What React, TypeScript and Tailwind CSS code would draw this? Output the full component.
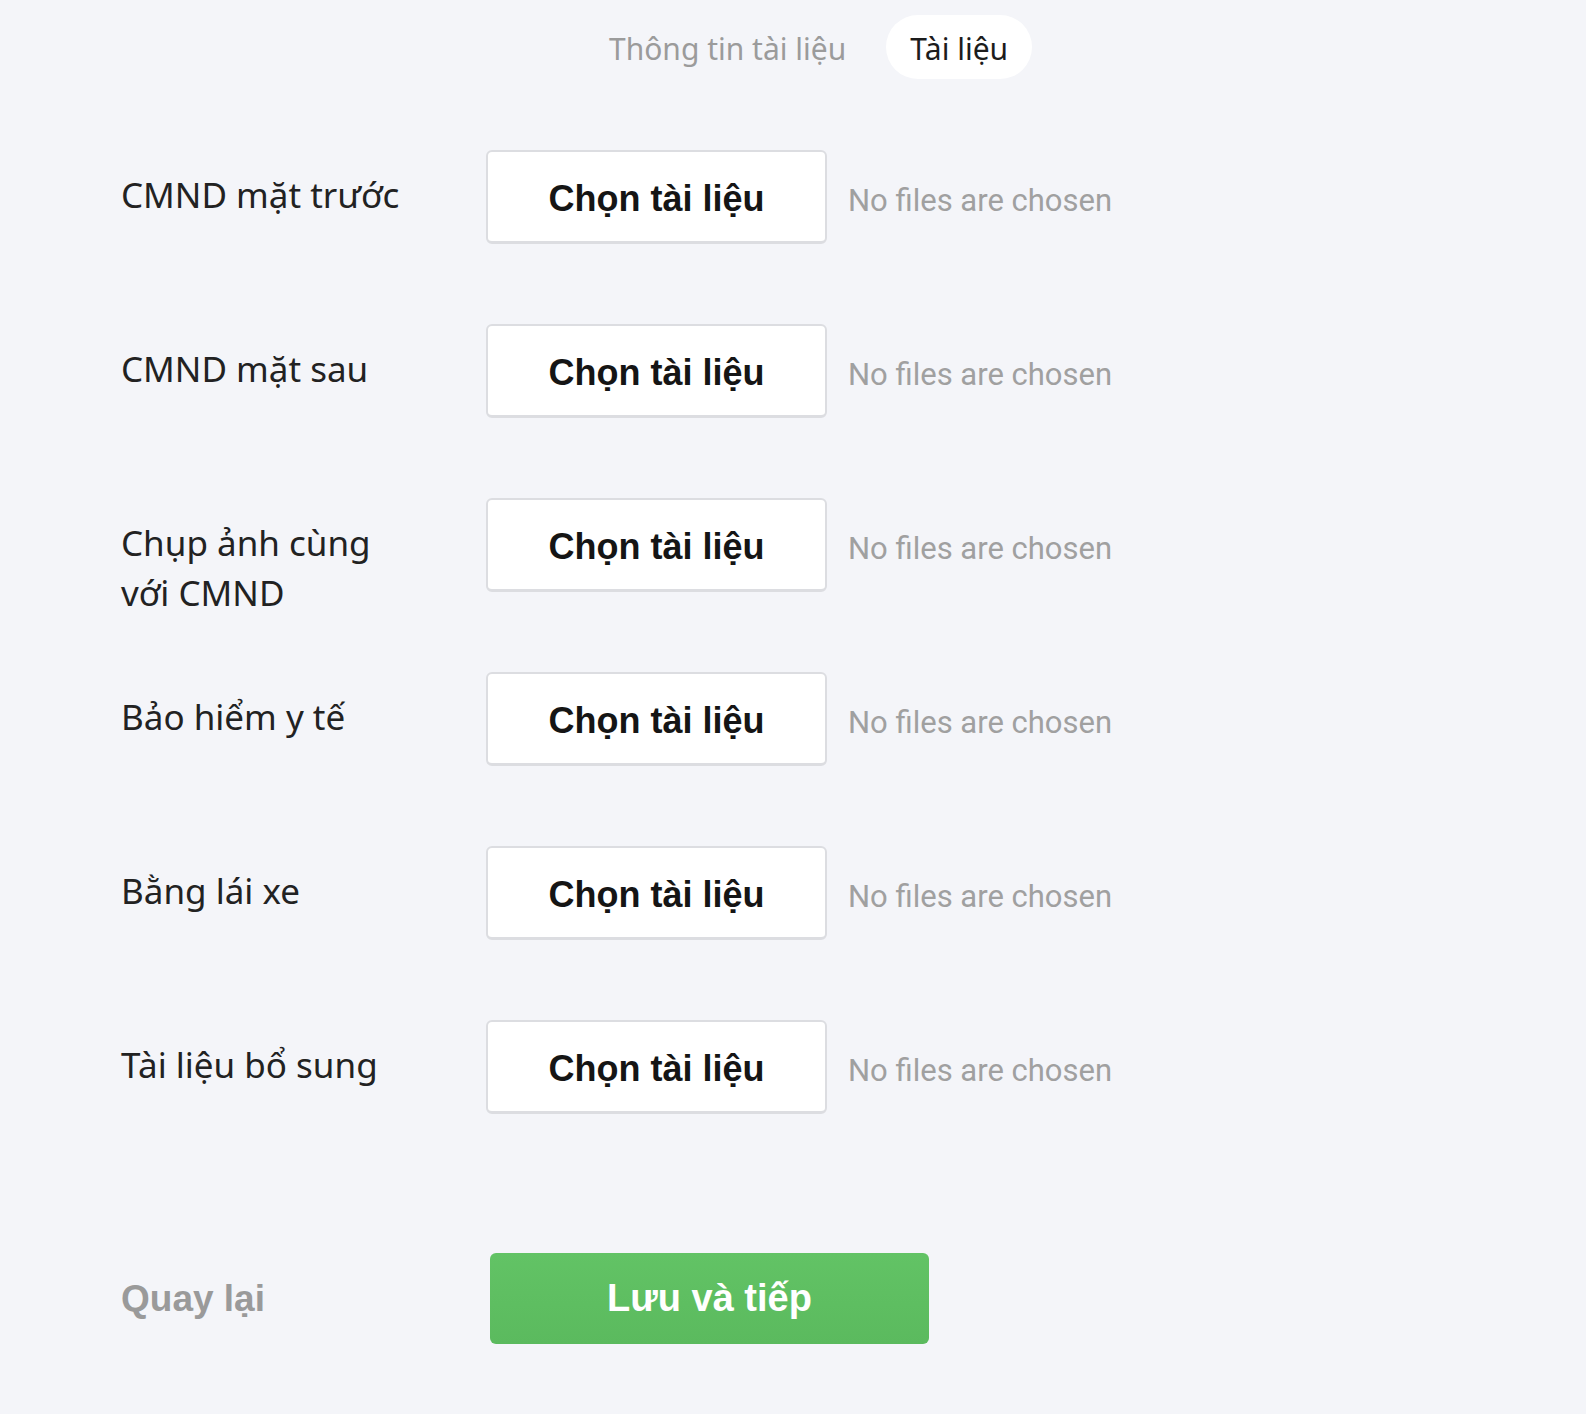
import React from 'react';

const rows = [
    'CMND mặt trước',
    'CMND mặt sau',
    'Chụp ảnh cùng với CMND',
    'Bảo hiểm y tế',
    'Bằng lái xe',
    'Tài liệu bổ sung',
];

export default function App() {
    return (
        <div className="min-h-[1414px] bg-[#f4f5f9] pt-[15px] font-['Noto_Sans',sans-serif]">
            {/* tabs */}
            <div className="flex items-center gap-4 ml-[585px] h-[64px]">
                <div className="px-6 pt-[2px] text-[30px] text-[#9b9b9b]">Thông tin tài liệu</div>
                <div className="h-[64px] px-6 pt-[2px] flex items-center rounded-full bg-white text-[30px] text-[#1c1c1c]">
                    Tài liệu
                </div>
            </div>

            <div className="pl-[121px] mt-[71px] flex flex-col gap-[80px]">
                {rows.map((label) => (
                    <UploadRow key={label} label={label} />
                ))}
            </div>

            <div className="pl-[121px] mt-[139px] flex items-center">
                <div className="w-[369px] text-[37px] font-bold text-[#9a9a9a] font-['Liberation_Sans',Arial,sans-serif]">
                    Quay lại
                </div>
                <button className="w-[439px] h-[91px] rounded-[6px] bg-gradient-to-b from-[#62c365] to-[#5bba5e] text-white text-[38px] font-bold font-['Liberation_Sans',Arial,sans-serif]">
                    Lưu và tiếp
                </button>
            </div>
        </div>
    );
}

function UploadRow({ label }: { label: string }) {
    return (
        <div className="flex items-start h-[94px]">
            <div className="w-[365px] pt-[20px] pr-[80px] text-[35px] leading-[50px] text-[#222]">
                {label}
            </div>
            <button className="w-[341px] h-[94px] pt-[5px] shrink-0 bg-white rounded-[6px] border-2 border-b-[3px] border-[#dcdde1] text-[36px] font-bold text-[#151515] font-['Liberation_Sans',Arial,sans-serif]">
                Chọn tài liệu
            </button>
            <span className="ml-[21px] mt-[31px] text-[31px] leading-[40px] text-[#a0a0a0] font-['Roboto',sans-serif]">
                No files are chosen
            </span>
        </div>
    );
}
